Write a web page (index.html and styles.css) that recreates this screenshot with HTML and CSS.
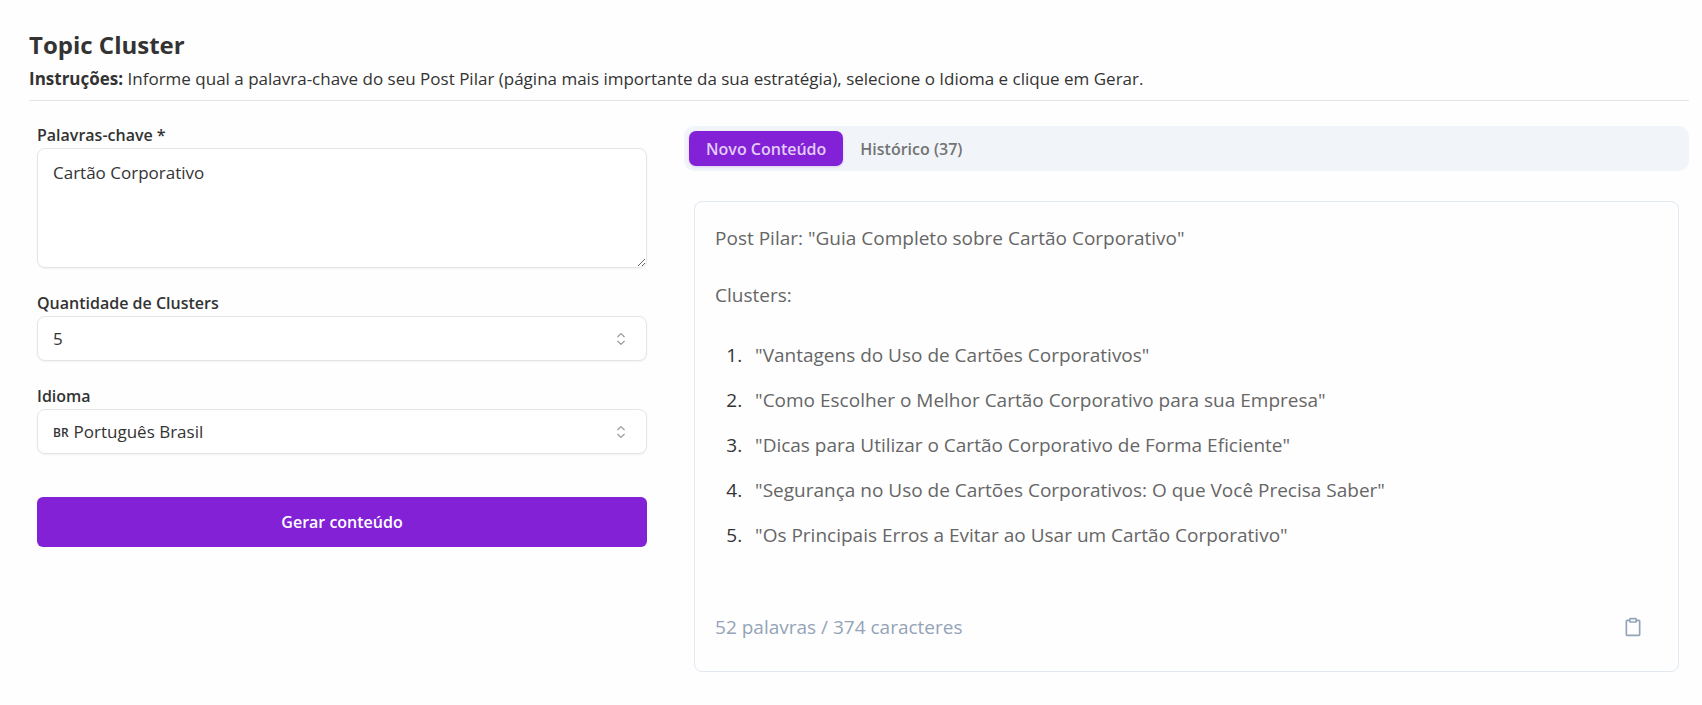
FILE: index.html
```html
<!DOCTYPE html>
<html lang="pt-BR">
<head>
  <meta charset="UTF-8">
  <meta name="viewport" content="width=device-width, initial-scale=1.0">
  <title>Topic Cluster</title>
  <link rel="stylesheet" href="styles.css">
</head>
<body>
  <header class="page-header">
    <h1>Topic Cluster</h1>
    <p><strong>Instruções:</strong> Informe qual a palavra-chave do seu Post Pilar (página mais importante da sua estratégia), selecione o Idioma e clique em Gerar.</p>
  </header>

  <main class="layout">
    <form id="clusterForm" class="cluster-form">
      <div class="form-group">
        <label for="keywords">Palavras-chave *</label>
        <textarea id="keywords" name="keywords" required>Cartão Corporativo</textarea>
      </div>
      <div class="form-group">
        <label for="quantity">Quantidade de Clusters</label>
        <div class="select-box">
          <select id="quantity" name="quantity">
            <option selected>5</option>
            <option>10</option>
            <option>15</option>
          </select>
          <svg class="select-icon" width="18" height="18" viewBox="0 0 15 15" fill="none" stroke="currentColor" stroke-linecap="round" stroke-linejoin="round"><path d="M4.8 5.6 7.5 3l2.7 2.6M4.8 9.4 7.5 12l2.7-2.6"/></svg>
        </div>
      </div>
      <div class="form-group">
        <label for="language">Idioma</label>
        <div class="select-box">
          <span class="country">BR</span>
          <select id="language" name="language">
            <option selected>Português Brasil</option>
          </select>
          <svg class="select-icon" width="18" height="18" viewBox="0 0 15 15" fill="none" stroke="currentColor" stroke-linecap="round" stroke-linejoin="round"><path d="M4.8 5.6 7.5 3l2.7 2.6M4.8 9.4 7.5 12l2.7-2.6"/></svg>
        </div>
      </div>
      <button type="submit" class="btn-generate">Gerar conteúdo</button>
    </form>

    <section class="results">
      <div class="tabs" role="tablist">
        <button type="button" class="tab active" role="tab" aria-selected="true">Novo Conteúdo</button>
        <button type="button" class="tab" role="tab" aria-selected="false">Histórico (37)</button>
      </div>

      <article class="card">
        <p>Post Pilar: "Guia Completo sobre Cartão Corporativo"</p>
        <p>Clusters:</p>
        <ol>
          <li>"Vantagens do Uso de Cartões Corporativos"</li>
          <li>"Como Escolher o Melhor Cartão Corporativo para sua Empresa"</li>
          <li>"Dicas para Utilizar o Cartão Corporativo de Forma Eficiente"</li>
          <li>"Segurança no Uso de Cartões Corporativos: O que Você Precisa Saber"</li>
          <li>"Os Principais Erros a Evitar ao Usar um Cartão Corporativo"</li>
        </ol>
        <footer class="card-footer">
          <span>52 palavras / 374 caracteres</span>
          <button type="button" class="btn-copy" aria-label="Copiar">
            <svg width="20" height="20" viewBox="0 0 24 24" fill="none" stroke="currentColor" stroke-width="2" stroke-linecap="round" stroke-linejoin="round"><rect x="8" y="2" width="8" height="4" rx="1"/><path d="M16 4h3a1 1 0 0 1 1 1v16a1 1 0 0 1-1 1H5a1 1 0 0 1-1-1V5a1 1 0 0 1 1-1h3"/></svg>
          </button>
        </footer>
      </article>
    </section>
  </main>

  <script>
    // Evita recarregar a página ao enviar
    document.getElementById('clusterForm').addEventListener('submit', (e) => {
      e.preventDefault();
    });
  </script>
</body>
</html>
```
FILE: styles.css
```css
* {
  box-sizing: border-box;
}
body {
  margin: 0;
  padding: 27px 13px 32px 29px;
  font-family: "Open Sans", "Noto Sans", sans-serif;
  font-size: 17px;
  line-height: 26px;
  color: #333;
  background-color: #fefefe;
}
h1, p, ol {
  margin: 0;
}
.page-header {
  padding-bottom: 8px;
  border-bottom: 1px solid #e2e4e8;
}
h1 {
  font-size: 24px;
  line-height: 36px;
  font-weight: 700;
  margin-bottom: 3px;
}
.layout {
  display: grid;
  grid-template-columns: 5fr 8fr;
  gap: 27px;
  margin-top: 25px;
}
.cluster-form {
  display: flex;
  flex-direction: column;
  padding: 0 10px 0 8px;
}
.form-group {
  margin-bottom: 26px;
}
label {
  display: block;
  padding-bottom: 4px;
  font-size: 16px;
  line-height: 18px;
  font-weight: 600;
}
textarea,
select {
  font: inherit;
  color: inherit;
}
textarea {
  display: block;
  width: 100%;
  height: 120px;
  padding: 11px 15px;
  border: 1px solid #e5e5e5;
  border-radius: 8px;
  background-color: #fff;
  box-shadow: 0 1px 2px rgba(0, 0, 0, 0.05);
}
.select-box {
  display: flex;
  align-items: center;
  height: 45px;
  padding: 0 16px 0 15px;
  border: 1px solid #e5e5e5;
  border-radius: 8px;
  background-color: #fff;
  box-shadow: 0 1px 2px rgba(0, 0, 0, 0.05);
}
.select-box select {
  flex: 1;
  padding: 0;
  border: none;
  background: none;
  appearance: none;
}
.select-icon {
  color: #999;
}
.country {
  font-size: 12px;
  font-weight: 600;
  margin: 3px 5px 0 0;
}
button {
  border: none;
  font: inherit;
  cursor: pointer;
}
.btn-generate {
  margin-top: 17px;
  height: 50px;
  border-radius: 6px;
  font-size: 16px;
  font-weight: 600;
  color: #fff;
  background-color: #8321d7;
}
.btn-generate:hover {
  background-color: #7219be;
}
.tabs {
  display: flex;
  padding: 5px;
  border-radius: 10px;
  background-color: #f1f5f9;
}
.tab {
  height: 35px;
  padding: 0 17px;
  border-radius: 7px;
  font-size: 16px;
  font-weight: 600;
  color: #737373;
  background: none;
}
.tab.active {
  color: #e2cdf6;
  background-color: #8321d7;
  box-shadow: 0 1px 3px rgba(131, 33, 215, 0.2);
}
.card {
  margin: 30px 10px 0;
  padding: 20px 20px 28px;
  border: 1px solid #e2e8f0;
  border-radius: 8px;
  font-size: 19px;
  line-height: 32px;
  color: #666;
}
.card p {
  margin-bottom: 25px;
}
ol {
  display: grid;
  gap: 13px;
  padding-left: 32px;
  margin-top: 28px;
}
li {
  padding-left: 8px;
}
li::marker {
  color: #333;
}
.card-footer {
  display: flex;
  align-items: center;
  justify-content: space-between;
  margin-top: 60px;
  padding-right: 15px;
  color: #94a3b8;
}
.btn-copy {
  display: flex;
  padding: 0;
  color: inherit;
  background: none;
}
```
